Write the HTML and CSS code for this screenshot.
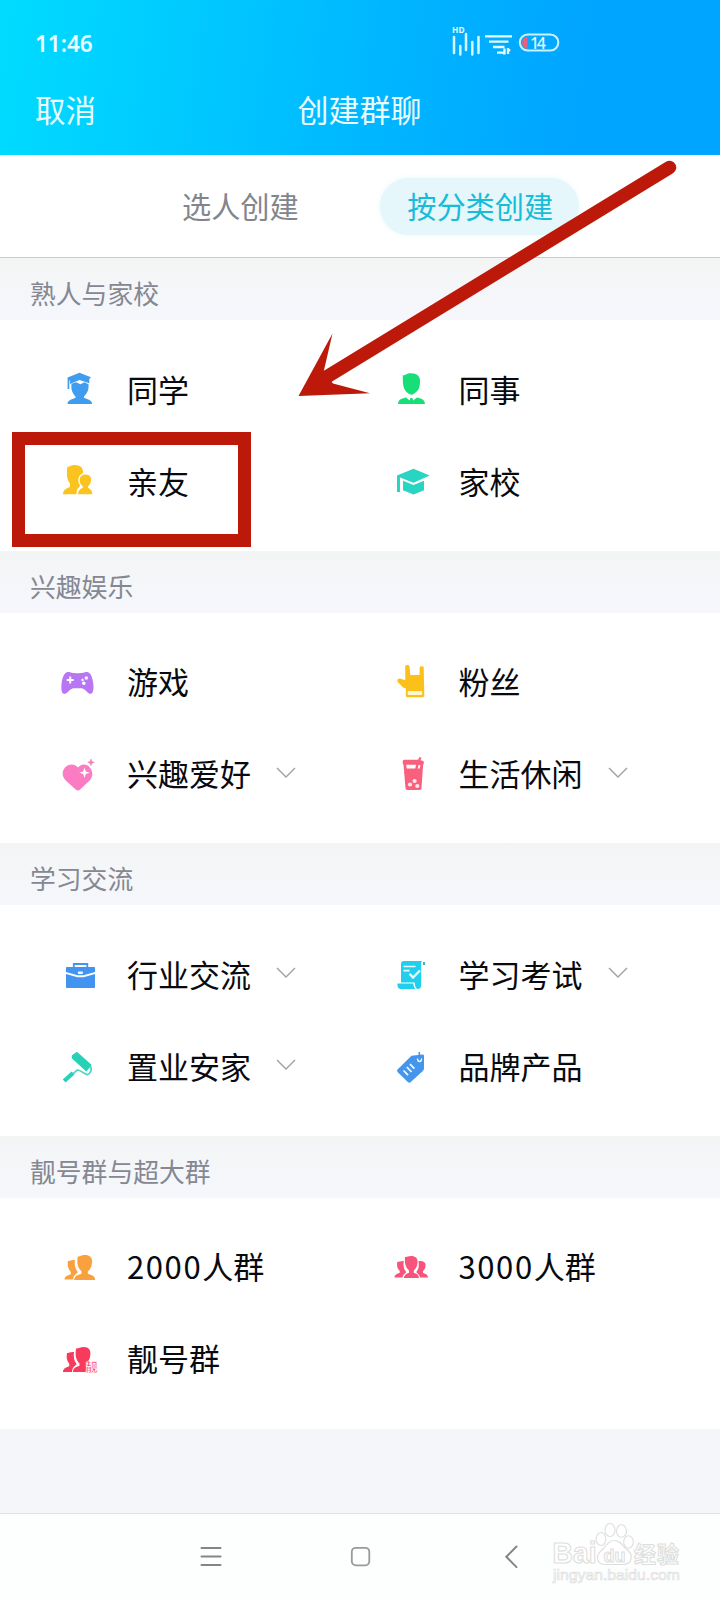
FILE: index.html
```html
<!DOCTYPE html>
<html lang="zh-CN">
<head>
<meta charset="utf-8">
<title>创建群聊</title>
<link rel="stylesheet" href="styles.css">
</head>
<body>
<div class="screen">
  <header class="top">
    <div class="status">
      <span class="time">11:46</span>
      <svg class="status-icons" viewBox="0 0 110 32" width="110" height="32">
        <text class="hd" x="1" y="9" textLength="12.500" lengthAdjust="spacingAndGlyphs">HD</text>
        <path d="M3 13v16M9.300 22v8.500M15 10v16M21.300 18v12.500M27.500 13v16" stroke="#d8f7ff" stroke-width="2.500" stroke-linecap="round"/>
        <path d="M34 12.300h27M38 17.700h19.500M42 23h11.500M46 28.600h5.500M53.500 24.500v6M57 24v6M53.500 30l-2-2M57 25l2 2" stroke="#e4fbff" stroke-width="2.300"/>
        <rect x="68.800" y="10.500" width="38.500" height="16" rx="8" fill="none" stroke="#c9f1ff" stroke-width="2.100"/>
        <path d="M76.300 12.500v12.400c-7-1-7-11.400 0-12.400z" fill="#e4617f"/>
        <text class="battery" x="79" y="24.500" textLength="16">14</text>
      </svg>
    </div>
    <div class="titlebar">
      <span class="cancel">取消</span>
      <h1 class="title">创建群聊</h1>
      <span></span>
    </div>
  </header>

  <nav class="tabs">
    <span class="tab">选人创建</span>
    <span class="tab active">按分类创建</span>
  </nav>

  <main>
    <section class="group">
      <h2 class="label">熟人与家校</h2>
      <div class="grid">
        <div class="item">
          <svg class="icon" viewBox="0 0 40 40" fill="#409cee"><path d="M19.500 2.700 31 7.300 29.300 9v4.200L19.500 10 10 14v-3.500l-.7-.2V19H7.600V7.500z"/><path d="m11.500 13.800 4.500-1.600 4.500 2 4-2 4 2c.3 5-.5 8-4.500 12.300v1.300c2.500 1.500 8 1.800 8.100 6.200H7.500c.2-4.400 5.500-4.700 8-6.200v-1.300c-4-4.300-4.500-7.700-4-12.700z"/></svg>
          <span>同学</span>
        </div>
        <div class="item">
          <svg class="icon" viewBox="0 0 40 40" fill="#16df78"><path d="M10.800 5.200c2.700.3 3.200-2 8-2 6.200 0 9.700 3.500 9.200 8.300-.2 6-1.300 9-5.600 12-2 1.500-4 1.500-6 0-5.600-3.800-5.600-9.500-5.600-18.300z"/><path d="M6 34c.3-3.800 2.500-5.200 8-6.500l3.600 3 .8-2.500h2l.8 2.500 3.800-3c5.500 1.300 7.700 2.700 8 6.500z"/></svg>
          <span>同事</span>
        </div>
        <div class="item">
          <svg class="icon" viewBox="0 0 40 40" fill="#fbc31d"><path d="M7.300 4.700C10 5 11 3 14.500 3c6 0 9 2.800 8.500 8.200-4.500 1.500-5.800 7-3.700 10.800.7 1.300 1.100 2-.3 3.200-2.500 1.600-2.500 4.500-2.500 7H3c.2-4.500 3-5.700 7-7.300v-3.500C6.200 16.500 6.800 11 7.300 4.700z"/><path d="M25.500 12.500c4.500 0 6.300 3 5.500 6.500-.4 2.500-1.400 4-3 5.300v1.400c2.300 1.200 4.200 2.800 4.300 6.500H18c.2-3.700 2-5.300 4.800-6.500v-1.400c-2-1.500-3.100-3.300-3.100-5.800 0-3.500 2-6 5.800-6z"/></svg>
          <span>亲友</span>
        </div>
        <div class="item">
          <svg class="icon" viewBox="0 0 40 40" fill="#28d4c2"><path d="M21.500 6.700 37.700 13.500 21.500 20.800 8 15.500V30H5V13.500z"/><path d="M11 18.800 21.500 23 32 18.800v9.500L21.500 32.500 11 28.300z"/></svg>
          <span>家校</span>
        </div>
      </div>
    </section>

    <section class="group">
      <h2 class="label">兴趣娱乐</h2>
      <div class="grid">
        <div class="item">
          <svg class="icon" viewBox="0 0 40 40"><path d="M8 9c3 0 4 1.300 9.500 1.300S24 9 27 9c3.500 0 5.500 5 6.300 12 .8 7-1 10.500-3.800 9.700C27 29.500 25 26 22 25.300h-9C10 26 8 29.500 5.500 30.700 2 31.500.9 28 1.500 21 2.300 14 4.500 9 8 9z" fill="#b875f4"/><path d="M10.200 13.500v7M6.700 17h7" stroke="#fff" stroke-width="2"/><circle cx="26.300" cy="15" r="1.700" fill="#fff"/><circle cx="22.500" cy="17" r="1.200" fill="#fff"/><circle cx="23.800" cy="20.300" r="1.700" fill="#fff"/></svg>
          <span>游戏</span>
        </div>
        <div class="item">
          <svg class="icon" viewBox="0 0 40 40"><path d="M13.200 3.500c0-2 4.300-2 4.300 0L18.300 12h9.200l.2-7.500c0-1.700 4-1.700 4 0l.6 28c0 1-.7 1.700-1.700 1.700H15.500c-1 0-1.700-.7-1.700-1.700v-7.300c-3 0-4.300-3-6.800-5C4.500 18.700 5 15 8 15.500l5.300 1.800z" fill="#fcc01b"/><rect x="15.700" y="28" width="14.500" height="4" rx=".8" fill="#fff6cf"/></svg>
          <span>粉丝</span>
        </div>
        <div class="item">
          <svg class="icon" viewBox="0 0 40 40"><path d="M18 12.500c4-4.500 9-3.500 12 .2 3.200 4 3.200 8.800-.4 12.800l-9.400 9c-1.500 1.300-3 1.300-4.500 0L5.500 25.200C1.700 21 2 16 5 12.500c3.500-3.800 9.500-4.500 13 0z" fill="#fb7cc3"/><path d="m24.500 12.500 1.300 3.900 3.900 1.300-3.900 1.300-1.300 3.900-1.300-3.900-3.900-1.300 3.900-1.300z" fill="#fff"/><path d="m31 4 .9 2.400 2.400.9-2.400.9-.9 2.400-.9-2.400-2.400-.9 2.400-.9z" fill="#f47ab8" stroke="#f47ab8" stroke-width=".5"/></svg>
          <span>兴趣爱好</span><svg class="chevron" viewBox="0 0 20 12"><path d="m1 1 9 9 9-9"/></svg>
        </div>
        <div class="item">
          <svg class="icon" viewBox="0 0 40 40"><path d="M12 4.700h14l1.600-2.800 2 .8-1.200 2.600 2.300.4c1.500.7 1.500 3 .4 4L29.500 33c-.1 1.300-.8 2-2 2h-12c-1.200 0-1.900-.7-2-2L11.500 9.700c-1.200-1-1.200-4.500.5-5z" fill="#f8607d"/><path d="M14.200 9.800h10l-1 3.700h-8.500zM26.500 10l2 .2-.8 3.300h-2z" fill="#fff"/><g fill="#ffe9ee"><circle cx="22.600" cy="26" r="2.100"/><circle cx="18" cy="29.500" r="2.100"/><circle cx="25.300" cy="31" r="2.100"/></g></svg>
          <span>生活休闲</span><svg class="chevron" viewBox="0 0 20 12"><path d="m1 1 9 9 9-9"/></svg>
        </div>
      </div>
    </section>

    <section class="group">
      <h2 class="label">学习交流</h2>
      <div class="grid">
        <div class="item">
          <svg class="icon" viewBox="0 0 40 40"><path d="M7 12h27c.7 0 1 .4 1 1v4l-11.500 3.200h-6L6 17v-4c0-.6.300-1 1-1zM6 19l11.500 3.300h6L35 19v13c0 .7-.4 1-1 1H7c-.6 0-1-.3-1-1z" fill="#4294f0"/><path d="M13.800 12V9h13.500v3" fill="none" stroke="#4294f0" stroke-width="1.800"/><rect x="17.800" y="16.500" width="5.200" height="2.600" rx="1" fill="#eaf6ff"/></svg>
          <span>行业交流</span><svg class="chevron" viewBox="0 0 20 12"><path d="m1 1 9 9 9-9"/></svg>
        </div>
        <div class="item">
          <svg class="icon" viewBox="0 0 40 40"><path d="M12 6h18c-1 1.300-.9 2-.9 3.500V30c0 2.500-1 4-3.200 4-2 0-2.800-2-3.200-6.400H9V9c0-2 1-3 3-3z" fill="#20cfec"/><path d="M5.500 28.500h15.800c.2 2.300.8 4 2.200 5.500H9c-2.500 0-3.800-2.200-3.500-5.500z" fill="#20cfec"/><path d="M31 7h2v3h-2z" fill="#3db3cb"/><path d="M11.500 11.500h12M11.500 15.700h6" stroke="#e8fcff" stroke-width="1.700"/><path d="m17.500 18.800 3.500 3.700 7-7" stroke="#e8fcff" stroke-width="2.300" fill="none"/></svg>
          <span>学习考试</span><svg class="chevron" viewBox="0 0 20 12"><path d="m1 1 9 9 9-9"/></svg>
        </div>
        <div class="item">
          <svg class="icon" viewBox="0 0 40 40"><path d="M12.500 8.800 17 5.700 30.700 18l-4.500 5.500L12.500 11z" fill="#27d1b8" stroke="#27d1b8" stroke-width="1.500" stroke-linejoin="round"/><path d="M30 19.500c2.800 2.200.5 7.200-2.800 8.200-3-.5-6-4.700-10-4.700l-4 3.700" fill="none" stroke="#47d4c0" stroke-width="1.700"/><path d="m13 26-8.800 8" stroke="#27d1b8" stroke-width="4.300"/></svg>
          <span>置业安家</span><svg class="chevron" viewBox="0 0 20 12"><path d="m1 1 9 9 9-9"/></svg>
        </div>
        <div class="item">
          <svg class="icon" viewBox="0 0 40 40"><path d="m19.500 8.700 11-1.200c1 0 1.500.5 1.500 1.500v12.500c0 1-.4 1.800-1.200 2.600l-12 11c-1 1-2 1-3 0L6 25.500c-1.200-1.300-1.200-2.500 0-3.500z" fill="#4595ed"/><path d="m11.500 23.500 4.500 4.700M14.800 20l4.800 5M18 17.200l4.400 4.500" stroke="#eef7ff" stroke-width="1.800"/><path d="M27.300 5v7" stroke="#4595ed" stroke-width="1.600"/><path d="M25.500 11.500c-.3 4 4.500 4 4 0" fill="none" stroke="#fff" stroke-width="1.300"/></svg>
          <span>品牌产品</span>
        </div>
      </div>
    </section>

    <section class="group">
      <h2 class="label">靓号群与超大群</h2>
      <div class="grid">
        <div class="item">
          <svg class="icon" viewBox="0 0 40 40" fill="#f8a13e"><path d="M8 13c2 0 3-1.300 7-1-.7 5 0 8.500 2.800 12-.5 2-4.300 2-4.600 7.500H4.500c.2-3 2.500-4 6.300-5.200v-2.500C7.500 20.500 7.300 17 8 13z"/><path d="M17.700 8.500C20.500 8.700 21 7 24.700 7c6 0 8 3.500 7.300 8-.4 4-1.500 6-4.200 8.500v2.300c4 1.500 7.200 2 7.400 6.200h-21c.2-4.200 3.300-4.700 7.300-6.200v-2.300c-4.300-4.200-4.600-8.500-3.800-15z"/></svg>
          <span><b class="num">2000</b>人群</span>
        </div>
        <div class="item">
          <svg class="icon" viewBox="0 0 40 40" fill="#f8537c"><path d="M5.300 14c2 0 2.500-1.200 6.500-1-.8 5 0 8.500 2.500 11-.7 1.500-3.500 2.500-3.800 5.500h-8c.2-3 2.500-3.500 5.200-4.700v-2C5 20.500 4.800 17.500 5.300 14zM26.500 13c4.500-.6 7.700 1.200 7 4.700-.2 2.500-1 4-2.500 5.300v2c2.700 1 4.800 1.500 5 4.500h-8c-.3-3-3-4-3.800-5.500 2.500-2.500 3-6 2.300-11z"/><path d="M13 9c2.500.2 3-1 6-1 5 0 7 2.700 6.500 7-.3 3.500-1.500 5.500-3.700 7.500v2.300c3 1.200 5 2 5.200 5.200H12c.2-3.200 2.200-4 5-5.200v-2.300c-4-4-4.500-8-4-13.500z"/></svg>
          <span><b class="num">3000</b>人群</span>
        </div>
        <div class="item">
          <svg class="icon" viewBox="0 0 40 40" fill="#f83a5c"><path d="M7 13c2 0 3-1.300 7-1-.7 5 0 8.500 2.500 12-.5 2-4.200 2-4.500 8H3c.2-3.500 2.500-4.500 6.300-5.700v-2.500C6.500 20.500 6.300 17 7 13z"/><path d="M16 8.500C19 8.700 20 7 23.500 7 29 7 31 10.500 30.300 15c-.4 4-1.500 6-4 8.500l-.6 8.500H13c.2-4.200 2.800-4.700 6.500-6.200v-2.300c-4-4.200-4.300-8.500-3.500-15z"/><text class="badge" x="25.500" y="31.500" textLength="12" lengthAdjust="spacingAndGlyphs">靓</text></svg>
          <span>靓号群</span>
        </div>
      </div>
    </section>
  </main>

  <footer class="navbar">
    <svg class="key" viewBox="0 0 24 24"><path d="M2.500 4h19M2.500 12.500h19M2.500 21h19" stroke-width="2"/></svg>
    <svg class="key" viewBox="0 0 24 24"><rect x="2.800" y="3.800" width="17.500" height="17.500" rx="4" stroke="#999" stroke-width="1.800"/></svg>
    <svg class="key" viewBox="0 0 24 24"><path d="M17.500 2.500 7.300 12.800l10.200 10.300" stroke-width="2"/></svg>
  </footer>

  <svg class="watermark" viewBox="0 0 134 66" width="134" height="66">
    <g fill="#fff" stroke="#dedede" stroke-width="1.100">
      <text class="wm-brand" x="2.500" y="41" textLength="44" lengthAdjust="spacingAndGlyphs">Bai</text>
      <path d="M64 18.500c6 0 8 4 11 7.500 5 4 7 6 6 11-1 4-4 5.500-8 5.500H55c-5 0-7.500-3-7.500-7s3-6 6-9c3-3.500 5-8 10.500-8z"/>
      <ellipse cx="51" cy="17" rx="4.800" ry="6.500"/><ellipse cx="60" cy="8" rx="5" ry="6.500"/><ellipse cx="71.500" cy="9" rx="5" ry="6.300"/><ellipse cx="78.500" cy="20" rx="4.800" ry="6.200"/>
      <text class="wm-du" x="53.500" y="39.500" textLength="22" lengthAdjust="spacingAndGlyphs">du</text>
      <text class="wm-cn" x="84" y="39.500" textLength="45">经验</text>
      <text class="wm-url" x="3" y="58" textLength="127" lengthAdjust="spacingAndGlyphs">jingyan.baidu.com</text>
    </g>
  </svg>
  <div class="frame"></div>
  <svg class="arrow" viewBox="290 155 400 250" width="400" height="250">
    <path d="M669.500 167.500 320 381" stroke="#bd190b" stroke-width="13.500" stroke-linecap="round"/>
    <path d="m298.500 396 34-62.500-9 38.800 9.500 11.200 37 9.800z" fill="#bd190b"/>
  </svg>
</div>
</body>
</html>
```
FILE: styles.css
```css
* { box-sizing: border-box; }
body {
  margin: 0;
  font-family: "Noto Sans CJK SC", "Noto Sans", sans-serif;
  color: #080a10;
  background: #fff;
}
.screen {
  position: relative;
  display: flex;
  flex-direction: column;
  width: 720px;
  height: 1600px;
  overflow: hidden;
  background: #f5f6fa;
}
.top {
  height: 155px;
  padding: 23px 36px 0 35px;
  color: #e9fcff;
  background: linear-gradient(98deg, #00dcff 0%, #00c7ff 30%, #00b4ff 56%, #00a5ff 80%);
}
.status {
  display: flex;
  align-items: center;
  height: 40px;
}
.time {
  width: 416px;
  padding-top: 1px;
  font: 600 22.500px/40px "Noto Sans", sans-serif;
}
.status-icons { fill: none; margin-top: -6px; }
.hd { font: 700 8px "Noto Sans", sans-serif; fill: #e4fbff; }
.battery { font: 500 16px "Noto Sans", sans-serif; fill: #e4fbff; }
.titlebar {
  display: grid;
  grid-template-columns: 1fr auto 1fr;
  height: 92px;
  line-height: 92px;
}
.cancel { font-size: 30.500px; }
.title { margin: 0; font-size: 31px; font-weight: 400; }
.tabs {
  display: flex;
  align-items: center;
  height: 103px;
  padding: 0 0 0 182px;
  gap: 81.500px;
  background: #fefffe;
  border-bottom: 1.500px solid #c9cccd;
  font-size: 29.200px;
  color: #83858d;
}
.tab { line-height: 54px; padding-bottom: 2px; }
.tab.active {
  padding: 0 26px 3px 27px;
  margin-right: auto;
  border-radius: 30px;
  color: #18bcd9;
  background: #e5f7fb;
  box-shadow: 0 0 5px #e9f8fc;
}
.group { height: 292.670px; background: #fefffe; }
.label {
  height: 62px;
  margin: 0;
  padding: 5px 30px 0;
  font-size: 25.800px;
  font-weight: 400;
  line-height: 60px;
  color: #858792;
  background: linear-gradient(#f3f5f5, #f5f7fc);
}
.grid {
  display: grid;
  grid-template-columns: 331.500px 331px;
  grid-auto-rows: 92px;
  padding: 24px 0 0 60px;
}
.item { display: flex; align-items: center; font-size: 31px; line-height: 46px; white-space: nowrap; }
.item span { padding-bottom: 3px; }
.icon { flex: none; width: 40px; height: 40px; margin-right: 27px; fill-rule: evenodd; }
.num { font-weight: 400; letter-spacing: 1.600px; }
.badge { font-size: 12px; font-weight: 700; fill: #f83a5c; stroke: #fff; stroke-width: .4px; }
.chevron {
  width: 20px;
  height: 12px;
  margin: -4px 0 0 25px;
  fill: none;
  stroke: #9da0a4;
  stroke-width: 1.400px;
}
.navbar {
  display: flex;
  align-items: center;
  gap: 126px;
  height: 87px;
  margin-top: auto;
  padding: 0 0 2px 199px;
  background: #fdfefe;
  border-top: 1px solid #e2e3e8;
}
.key { width: 24px; height: 24px; fill: none; stroke: #858585; stroke-linecap: round; }
.watermark { position: absolute; left: 550px; top: 1522px; }
.wm-brand { font: 700 29px "Liberation Sans", sans-serif; }
.wm-du { font: 700 19px "Liberation Sans", sans-serif; }
.wm-cn { font: 700 22px "Noto Sans CJK SC", sans-serif; }
.wm-url { font: 400 15px "Liberation Sans", sans-serif; stroke-width: .7px; }
.frame {
  position: absolute;
  left: 12px;
  top: 432px;
  width: 239px;
  height: 115px;
  border: 13px solid #bd190b;
}
.arrow { position: absolute; left: 290px; top: 155px; }
```
